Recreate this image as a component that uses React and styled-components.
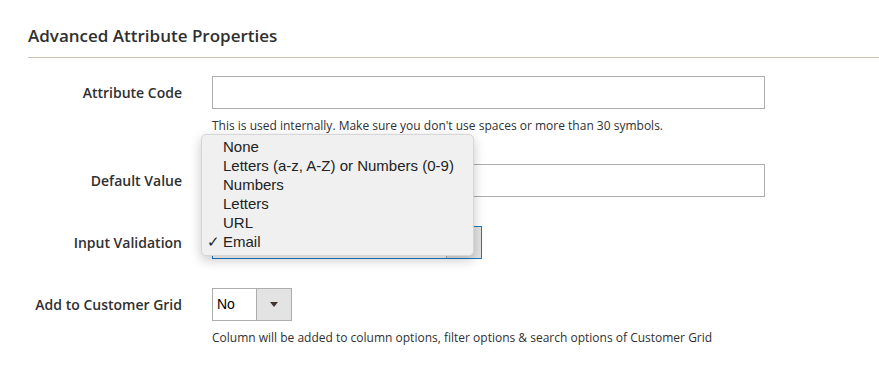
import React from "react";
import styled, { createGlobalStyle } from "styled-components";

const GlobalStyle = createGlobalStyle`
  body {
    margin: 0;
    background: #ffffff;
    font-family: "Open Sans", "Liberation Sans", sans-serif;
    color: #303030;
  }
`;

const validationOptions = [
  "None",
  "Letters (a-z, A-Z) or Numbers (0-9)",
  "Numbers",
  "Letters",
  "URL",
  "Email",
];

export default function App() {
  return (
    <>
      <GlobalStyle />
      <Section>
        <Title>Advanced Attribute Properties</Title>
        <Fields>
          <Field>
            <Label>Attribute Code</Label>
            <Control>
              <TextInput type="text" />
              <Note>
                This is used internally. Make sure you don't use spaces or more
                than 30 symbols.
              </Note>
            </Control>
          </Field>
          <Field>
            <Label>Default Value</Label>
            <Control>
              <TextInput type="text" />
            </Control>
          </Field>
          <Field>
            <Label>Input Validation</Label>
            <Control>
              <Select width={270} focused>
                <SelectValue>Email</SelectValue>
                <SelectArrow />
              </Select>
              <Popup>
                {validationOptions.map((opt) => (
                  <Option key={opt}>
                    <Check>{opt === "Email" ? "✓" : ""}</Check>
                    {opt}
                  </Option>
                ))}
              </Popup>
            </Control>
          </Field>
          <Field>
            <Label>Add to Customer Grid</Label>
            <Control>
              <Select width={80}>
                <SelectValue>No</SelectValue>
                <SelectArrow>
                  <Triangle />
                </SelectArrow>
              </Select>
              <Note>
                Column will be added to column options, filter options &amp;
                search options of Customer Grid
              </Note>
            </Control>
          </Field>
        </Fields>
      </Section>
    </>
  );
}

const Section = styled.div`
  padding: 1px 0 0 28px;
`;

const Title = styled.h2`
  margin: 0;
  padding: 24px 0 10px;
  font-size: 17px;
  font-weight: 600;
  line-height: 22px;
  color: #303030;
  border-bottom: 1px solid #cac3b4;
`;

const Fields = styled.div`
  display: flex;
  flex-direction: column;
  gap: 29px;
  padding-top: 18px;
`;

const Field = styled.div`
  display: grid;
  grid-template-columns: 154px 553px;
  column-gap: 30px;
  align-items: start;
`;

const Label = styled.label`
  text-align: right;
  font-size: 14px;
  font-weight: 600;
  line-height: 33px;
  color: #303030;
`;

const Control = styled.div`
  position: relative;
  display: flex;
  flex-direction: column;
  align-items: flex-start;
`;

const TextInput = styled.input`
  box-sizing: border-box;
  width: 553px;
  height: 33px;
  margin: 0;
  border: 1px solid #adadad;
  border-radius: 0;
  background: #fff;
  outline: none;
`;

const Note = styled.div`
  margin-top: 8px;
  font-size: 12px;
  line-height: 18px;
  color: #303030;
`;

const Select = styled.div`
  box-sizing: border-box;
  display: flex;
  width: ${(p) => p.width}px;
  height: 33px;
  border: 1px solid ${(p) => (p.focused ? "#1979c3" : "#adadad")};
  background: #fff;
`;

const SelectValue = styled.span`
  flex: 1;
  padding-left: 4px;
  font-family: "Liberation Sans", Arial, sans-serif;
  font-size: 14px;
  line-height: 31px;
  color: #000;
`;

const SelectArrow = styled.span`
  width: 34px;
  display: flex;
  align-items: center;
  justify-content: center;
  background: #e3e3e3;
  border-left: 1px solid #adadad;
`;

const Triangle = styled.span`
  width: 0;
  height: 0;
  border-left: 4px solid transparent;
  border-right: 4px solid transparent;
  border-top: 5px solid #41362f;
`;

const Popup = styled.div`
  position: absolute;
  left: -11px;
  top: -92px;
  box-sizing: border-box;
  width: 273px;
  padding: 2px 0 4px;
  background: #f0f0f0;
  border: 1px solid #d6d6d6;
  border-radius: 5px;
  box-shadow: 0 4px 12px rgba(0, 0, 0, 0.22);
`;

const Option = styled.div`
  display: flex;
  align-items: center;
  height: 19px;
  font-family: "Liberation Sans", Arial, sans-serif;
  font-size: 15px;
  color: #222;
`;

const Check = styled.span`
  width: 21px;
  padding-left: 5px;
  box-sizing: border-box;
  font-size: 15px;
`;
